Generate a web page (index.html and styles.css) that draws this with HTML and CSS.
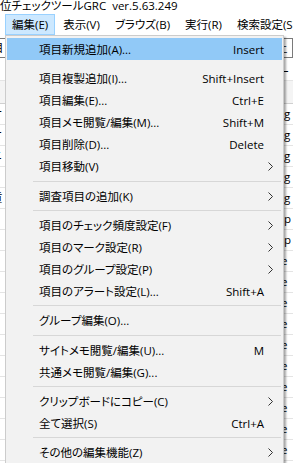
FILE: index.html
```html
<!DOCTYPE html>
<html lang="ja">
<head>
    <meta charset="UTF-8">
    <title>順位チェックツールGRC</title>
    <link rel="stylesheet" href="styles.css">
</head>
<body>
    <div class="window">
        <div class="titlebar">位チェックツールGRC&nbsp; ver.5.63.249</div>

        <div class="menubar">
            <span class="menubar-item active">編集(E)</span>
            <span class="menubar-item">表示(V)</span>
            <span class="menubar-item">ブラウズ(B)</span>
            <span class="menubar-item">実行(R)</span>
            <span class="menubar-item">検索設定(S)</span>
        </div>

        <!-- 後ろのウィンドウ内容 (左右の端だけ見える) -->
        <div class="backdrop">
            <div class="search-row">
                <span class="box left">目</span>
                <span class="box right">土</span>
            </div>
            <div class="bg-row"><span class="left">リ</span><span class="right">—</span></div>
            <div class="bg-head"></div>
            <div class="bg-table" id="bgTable"></div>
        </div>

        <!-- 編集メニュー -->
        <div class="dropdown">
            <div class="menu-item selected"><span class="label">項目新規追加(A)...</span><span class="key">Insert</span></div>
            <div class="menu-item"><span class="label">項目複製追加(I)...</span><span class="key">Shift+Insert</span></div>
            <div class="menu-item"><span class="label">項目編集(E)...</span><span class="key">Ctrl+E</span></div>
            <div class="menu-item"><span class="label">項目メモ閲覧/編集(M)...</span><span class="key">Shift+M</span></div>
            <div class="menu-item"><span class="label">項目削除(D)...</span><span class="key">Delete</span></div>
            <div class="menu-item sub"><span class="label">項目移動(V)</span></div>
            <div class="separator wide"></div>
            <div class="menu-item sub"><span class="label">調査項目の追加(K)</span></div>
            <div class="separator"></div>
            <div class="menu-item sub"><span class="label">項目のチェック頻度設定(F)</span></div>
            <div class="menu-item sub"><span class="label">項目のマーク設定(R)</span></div>
            <div class="menu-item sub"><span class="label">項目のグループ設定(P)</span></div>
            <div class="menu-item"><span class="label">項目のアラート設定(L)...</span><span class="key">Shift+A</span></div>
            <div class="separator"></div>
            <div class="menu-item"><span class="label">グループ編集(O)...</span></div>
            <div class="separator wide"></div>
            <div class="menu-item"><span class="label">サイトメモ閲覧/編集(U)...</span><span class="key">M</span></div>
            <div class="menu-item"><span class="label">共通メモ閲覧/編集(G)...</span></div>
            <div class="separator"></div>
            <div class="menu-item sub"><span class="label">クリップボードにコピー(C)</span></div>
            <div class="menu-item"><span class="label">全て選択(S)</span><span class="key">Ctrl+A</span></div>
            <div class="separator"></div>
            <div class="menu-item sub"><span class="label">その他の編集機能(Z)</span></div>
        </div>
    </div>

    <script>
        // 背景の一覧 (右端に見える文字)
        const rows = [
            ["ケ", "og"], ["オ", "og"], ["ニ", "og"], ["", "og"], ["貢", "og"],
            ["", "up"], ["", "up"], ["J", "te"], ["", "te"], ["", "te"],
            ["", "te"], ["", "te"], ["", "te"], ["", "te"], ["", "te"], ["", "te"], ["", "te"]
        ];
        const table = document.getElementById('bgTable');
        rows.forEach(r => {
            table.innerHTML += `<div class="bg-row"><span class="left">${r[0]}</span><span class="right">${r[1]}</span></div>`;
        });

        // サブメニュー矢印
        document.querySelectorAll('.menu-item.sub').forEach(item => {
            item.innerHTML += '<svg class="arrow" width="5" height="9" viewBox="0 0 5 9"><path d="M0.5 0.5 L4.5 4.5 L0.5 8.5" fill="none" stroke="#333" stroke-width="1"/></svg>';
        });
    </script>
</body>
</html>
```

FILE: styles.css
```css
body {
    margin: 0;
    padding: 0;
    font-family: "Open Sans", "Noto Sans CJK JP", sans-serif;
    font-size: 11.5px;
    font-feature-settings: "palt";
    color: #000;
    background-color: #fff;
}

.window {
    position: relative;
    width: 293px;
    height: 463px;
    overflow: hidden;
}

.titlebar {
    height: 14px;
    line-height: 12px;
    white-space: nowrap;
}

.menubar {
    display: flex;
    height: 21px;
    padding-left: 5px;
    white-space: nowrap;
}

.menubar-item {
    padding: 0 6px;
    line-height: 19px;
    border: 1px solid transparent;
    margin-right: 1px;
}

.menubar-item.active {
    background-color: #cce8ff;
    border-color: #99d1ff;
}

/* 背景 */
.backdrop {
    padding-top: 1px;
}

.backdrop .left {
    width: 14px;
    margin-left: -9px;
    overflow: hidden;
}

.backdrop .right {
    margin-left: auto;
    width: 16px;
    padding-left: 1px;
    overflow: hidden;
}

.search-row {
    display: flex;
    height: 24px;
    align-items: center;
}

.search-row .box {
    border: 1px solid #7a7a7a;
    height: 18px;
    line-height: 18px;
}

.bg-row {
    display: flex;
    height: 21px;
    line-height: 20px;
    border-bottom: 1px solid #e4e4e4;
    box-sizing: border-box;
}

.bg-head {
    height: 22px;
    background-color: #f4f4f4;
    border-bottom: 1px solid #d0d0d0;
}

/* ドロップダウンメニュー */
.dropdown {
    position: absolute;
    left: 5px;
    top: 35px;
    width: 275px;
    height: 440px;
    padding: 2px 1px 0 1px;
    background-color: #f2f2f2;
    border: 1px solid #cccccc;
    box-shadow: 2px 2px 2px rgba(0, 0, 0, 0.35);
}

.menu-item {
    display: flex;
    align-items: center;
    height: 22px;
    padding: 0 18px 0 32px;
    position: relative;
    white-space: nowrap;
}

.menu-item.selected {
    background-color: #91c9f7;
    margin-bottom: 7px;
}

.menu-item .label {
    flex: 1;
}

.menu-item .key {
    text-align: right;
}

.menu-item .arrow {
    position: absolute;
    right: 9px;
    top: 7px;
}

.separator {
    height: 7px;
    margin-left: 26px;
    margin-right: 1px;
    background: linear-gradient(#d7d7d7, #d7d7d7) no-repeat 0 3px / 100% 1px;
}

.separator.wide {
    height: 8px;
    background-position: 0 4px;
}
```
